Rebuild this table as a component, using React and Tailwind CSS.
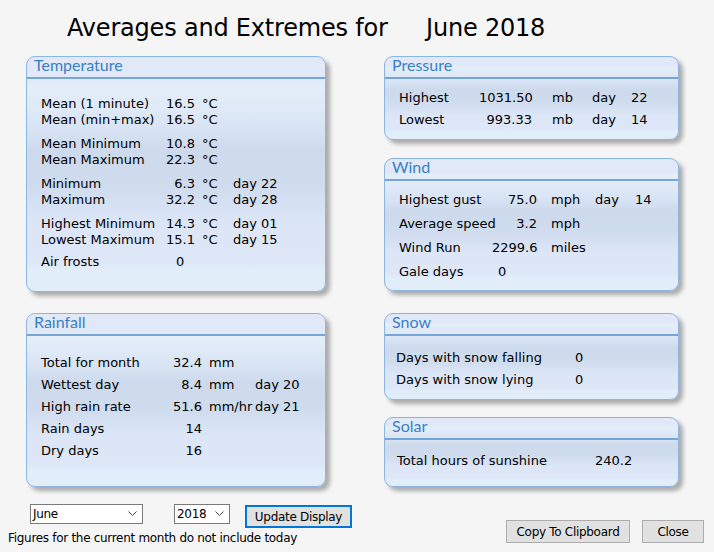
import React from "react";

const body = { fontFamily: '"DejaVu Sans", Verdana, sans-serif' };
const ui = { fontFamily: '"DejaVu Sans", Tahoma, sans-serif' };

const Panel = ({ title, h, pt, children }) => (
  <div
    className={`rounded-[9px] border border-[#8cb5e0] shadow-[4px_4px_4px_rgba(0,0,0,0.3)] overflow-hidden bg-[linear-gradient(to_bottom,#e1e9f9_0%,#e1e9f9_10%,#e3eef9_13%,#dfe9f7_22%,#d8e4f4_30%,#cddaeb_40%,#cfdcee_55%,#d5e1f3_63%,#dce6f7_72%,#dee7f8_88%,#e1eef9_91%,#e1eef9_100%)] ${h}`}
  >
    <div
      className="h-[20px] pl-[7px] text-[16px] leading-[16px] text-[#3a7fc5]"
      style={{ fontFamily: "Lato, sans-serif" }}
    >
      {title}
    </div>
    <div className="h-[2px] bg-[#78a6d4]" />
    <div className={`text-[13px] text-black ${pt}`} style={body}>
      {children}
    </div>
  </div>
);

// each cell: [text, classes]
const Row = ({ cells, h = "h-[22px]", pl = "pl-[14px]" }) => (
  <div className={`flex items-center whitespace-nowrap ${h} ${pl}`}>
    {cells.map(([t, c], i) => (
      <div key={i} className={c}>
        {t}
      </div>
    ))}
  </div>
);

const tempRow = (label, val, unit, day) => [
  [label, "w-[124px]"],
  [val, "w-[30px] text-right"],
  [unit, "ml-[7px] w-[31px]"],
  [day, ""],
];

const rainRow = (label, val, unit, day) => [
  [label, "w-[130px]"],
  [val, "w-[31px] text-right"],
  [unit, "ml-[7px] w-[46px]"],
  [day, ""],
];

const pressRow = (label, val, day) => [
  [label, "w-[80px]"],
  [val, "w-[53px] text-right"],
  ["mb", "ml-[20px] w-[40px]"],
  ["day", "w-[39px]"],
  [day, ""],
];

const windRow = (label, val, unit, day) => [
  [label, "w-[93px]"],
  [val, "w-[45px] text-right"],
  [unit, "ml-[14px] w-[44px]"],
  [day ? "day" : "", "w-[40px]"],
  [day, ""],
];

const Chevron = () => (
  <svg width="9" height="6" viewBox="0 0 9 6" className="text-[#444]">
    <polyline points="0.5,0.5 4.5,4.5 8.5,0.5" fill="none" stroke="currentColor" strokeWidth="1" />
  </svg>
);

export default function App() {
  return (
    <div className="w-[714px] h-[552px] bg-[#f5f5f5] overflow-hidden">
      <div className="pt-[14px] pl-[67px] flex text-[24px] leading-[28px] tracking-[-0.2px] text-black" style={body}>
        <span className="w-[359px]">Averages and Extremes for</span>
        <span>June 2018</span>
      </div>

      <div className="mt-[14px] flex">
        <div className="ml-[26px] w-[300px] flex flex-col gap-[21px]">
          <Panel title="Temperature" h="h-[236px]" pt="pt-[17px]">
            <div className="flex flex-col">
              <Row h="h-[16px]" cells={tempRow("Mean (1 minute)", "16.5", "°C", "")} />
              <Row h="h-[16px]" cells={tempRow("Mean (min+max)", "16.5", "°C", "")} />
              <div className="h-[8px]" />
              <Row h="h-[16px]" cells={tempRow("Mean Minimum", "10.8", "°C", "")} />
              <Row h="h-[16px]" cells={tempRow("Mean Maximum", "22.3", "°C", "")} />
              <div className="h-[8px]" />
              <Row h="h-[16px]" cells={tempRow("Minimum", "6.3", "°C", "day 22")} />
              <Row h="h-[16px]" cells={tempRow("Maximum", "32.2", "°C", "day 28")} />
              <div className="h-[8px]" />
              <Row h="h-[16px]" cells={tempRow("Highest Minimum", "14.3", "°C", "day 01")} />
              <Row h="h-[16px]" cells={tempRow("Lowest Maximum", "15.1", "°C", "day 15")} />
              <div className="h-[6px]" />
              <Row h="h-[16px]" cells={[["Air frosts", "w-[135px]"], ["0", ""]]} />
            </div>
          </Panel>

          <Panel title="Rainfall" h="h-[174px]" pt="pt-[16px]">
            <Row cells={rainRow("Total for month", "32.4", "mm", "")} />
            <Row cells={rainRow("Wettest day", "8.4", "mm", "day 20")} />
            <Row cells={rainRow("High rain rate", "51.6", "mm/hr", "day 21")} />
            <Row cells={rainRow("Rain days", "14", "", "")} />
            <Row cells={rainRow("Dry days", "16", "", "")} />
          </Panel>
        </div>

        <div className="ml-[58px] w-[295px] flex flex-col">
          <Panel title="Pressure" h="h-[84px]" pt="pt-[8px]">
            <Row cells={pressRow("Highest", "1031.50", "22")} />
            <Row cells={pressRow("Lowest", "993.33", "14")} />
          </Panel>

          <div className="mt-[18px]">
            <Panel title="Wind" h="h-[133px]" pt="pt-[7px]">
              <Row h="h-[24px]" cells={windRow("Highest gust", "75.0", "mph", "14")} />
              <Row h="h-[24px]" cells={windRow("Average speed", "3.2", "mph", "")} />
              <Row h="h-[24px]" cells={windRow("Wind Run", "2299.6", "miles", "")} />
              <Row h="h-[24px]" cells={[["Gale days", "w-[99px]"], ["0", ""]]} />
            </Panel>
          </div>

          <div className="mt-[22px]">
            <Panel title="Snow" h="h-[87px]" pt="pt-[11px]">
              <Row pl="pl-[11px]" cells={[["Days with snow falling", "w-[179px]"], ["0", ""]]} />
              <Row pl="pl-[11px]" cells={[["Days with snow lying", "w-[179px]"], ["0", ""]]} />
            </Panel>
          </div>

          <div className="mt-[17px]">
            <Panel title="Solar" h="h-[70px]" pt="pt-[10px]">
              <Row pl="pl-[12px]" cells={[["Total hours of sunshine", "w-[198px]"], ["240.2", ""]]} />
            </Panel>
          </div>
        </div>
      </div>

      <div className="flex justify-between text-[12px] text-black tracking-[-0.3px]" style={ui}>
        <div className="flex flex-col">
          <div className="pl-[30px] pt-[17px] flex items-start">
            <div className="w-[113px] h-[20px] border border-[#7a7a7a] bg-white flex items-center justify-between pl-[2px] pr-[5px]">
              <span>June</span>
              <Chevron />
            </div>
            <div className="ml-[31px] w-[56px] h-[20px] border border-[#7a7a7a] bg-white flex items-center justify-between pl-[2px] pr-[5px]">
              <span>2018</span>
              <Chevron />
            </div>
            <div className="ml-[15px] mt-[1px] w-[107px] h-[23px] border-2 border-[#0078d7] bg-[#e1e1e1] flex items-center justify-center">
              Update Display
            </div>
          </div>
          <div className="pl-[8px] mt-[3px] leading-[14px]">Figures for the current month do not include today</div>
        </div>
        <div className="pt-[33px] pr-[10px] flex gap-[12px]">
          <div className="w-[124px] h-[23px] border border-[#adadad] bg-[#e1e1e1] flex items-center justify-center">
            Copy To Clipboard
          </div>
          <div className="w-[62px] h-[23px] border border-[#adadad] bg-[#e1e1e1] flex items-center justify-center">
            Close
          </div>
        </div>
      </div>
    </div>
  );
}
